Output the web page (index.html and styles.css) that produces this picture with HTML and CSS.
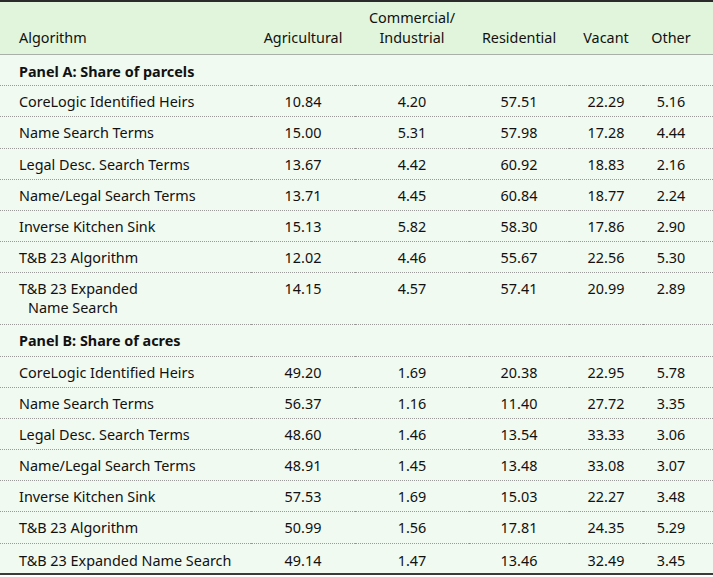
FILE: index.html
```html
<!DOCTYPE html>
<html>
<head>
<meta charset="utf-8">
<link rel="stylesheet" href="styles.css">
</head>
<body>
<table class="tbl">
  <colgroup>
    <col class="c1"><col class="c2"><col class="c3"><col class="c4"><col class="c5"><col class="c6">
  </colgroup>
  <thead>
    <tr>
      <th class="name">Algorithm</th>
      <th>Agricultural</th>
      <th>Commercial/<br>Industrial</th>
      <th>Residential</th>
      <th>Vacant</th>
      <th class="last">Other</th>
    </tr>
  </thead>
  <tbody>
    <tr class="panel"><td colspan="6">Panel A: Share of parcels</td></tr>
    <tr><td class="name">CoreLogic Identified Heirs</td><td>10.84</td><td>4.20</td><td>57.51</td><td>22.29</td><td class="last">5.16</td></tr>
    <tr><td class="name">Name Search Terms</td><td>15.00</td><td>5.31</td><td>57.98</td><td>17.28</td><td class="last">4.44</td></tr>
    <tr><td class="name">Legal Desc. Search Terms</td><td>13.67</td><td>4.42</td><td>60.92</td><td>18.83</td><td class="last">2.16</td></tr>
    <tr><td class="name">Name/Legal Search Terms</td><td>13.71</td><td>4.45</td><td>60.84</td><td>18.77</td><td class="last">2.24</td></tr>
    <tr><td class="name">Inverse Kitchen Sink</td><td>15.13</td><td>5.82</td><td>58.30</td><td>17.86</td><td class="last">2.90</td></tr>
    <tr><td class="name">T&amp;B 23 Algorithm</td><td>12.02</td><td>4.46</td><td>55.67</td><td>22.56</td><td class="last">5.30</td></tr>
    <tr class="tall"><td class="name">T&amp;B 23 Expanded<br><span class="indent">Name Search</span></td><td>14.15</td><td>4.57</td><td>57.41</td><td>20.99</td><td class="last">2.89</td></tr>
    <tr class="panel"><td colspan="6">Panel B: Share of acres</td></tr>
    <tr><td class="name">CoreLogic Identified Heirs</td><td>49.20</td><td>1.69</td><td>20.38</td><td>22.95</td><td class="last">5.78</td></tr>
    <tr><td class="name">Name Search Terms</td><td>56.37</td><td>1.16</td><td>11.40</td><td>27.72</td><td class="last">3.35</td></tr>
    <tr><td class="name">Legal Desc. Search Terms</td><td>48.60</td><td>1.46</td><td>13.54</td><td>33.33</td><td class="last">3.06</td></tr>
    <tr><td class="name">Name/Legal Search Terms</td><td>48.91</td><td>1.45</td><td>13.48</td><td>33.08</td><td class="last">3.07</td></tr>
    <tr><td class="name">Inverse Kitchen Sink</td><td>57.53</td><td>1.69</td><td>15.03</td><td>22.27</td><td class="last">3.48</td></tr>
    <tr><td class="name">T&amp;B 23 Algorithm</td><td>50.99</td><td>1.56</td><td>17.81</td><td>24.35</td><td class="last">5.29</td></tr>
    <tr class="end"><td class="name">T&amp;B 23 Expanded Name Search</td><td>49.14</td><td>1.47</td><td>13.46</td><td>32.49</td><td class="last">3.45</td></tr>
  </tbody>
</table>
</body>
</html>
```

FILE: styles.css
```css
html, body {
  margin: 0;
  padding: 0;
  background: #ffffff;
}

.tbl {
  width: 713px;
  table-layout: fixed;
  border-collapse: collapse;
  font-family: "Noto Sans", "Open Sans", sans-serif;
  font-size: 14.4px;
  color: #111111;
  border-top: 2px solid #2b2b2b;
  border-bottom: 2px solid #3a3a3a;
}

.c1 { width: 251px; }
.c2 { width: 104px; }
.c3 { width: 114px; }
.c4 { width: 100px; }
.c5 { width: 74px; }
.c6 { width: 70px; }

.tbl thead tr {
  background: #e1f5dc;
  border-bottom: 1px solid #a8b0a8;
}

.tbl th {
  font-weight: normal;
  text-align: center;
  vertical-align: bottom;
  line-height: 20px;
  padding: 6px 0 6px 0;
}

.tbl tbody tr {
  background: #f1faf0;
  border-bottom: 1px dotted #9a9a9a;
}

.tbl tbody tr.end {
  border-bottom: none;
}

.tbl td {
  text-align: center;
  vertical-align: top;
  line-height: 19px;
  padding: 6px 0 5.2px 0;
}

.tbl tr.panel:first-child td {
  padding-top: 7px;
  padding-bottom: 4.2px;
}

.tbl tr.end td {
  padding-top: 7px;
  padding-bottom: 3px;
}

.tbl .name {
  text-align: left;
  padding-left: 19px;
}

.tbl .last {
  padding-right: 14px;
}

.tbl tr.panel td {
  text-align: left;
  font-weight: bold;
  padding-left: 19px;
}

.tbl tr.tall td {
  padding-bottom: 7px;
}

.indent {
  padding-left: 9px;
}
```
